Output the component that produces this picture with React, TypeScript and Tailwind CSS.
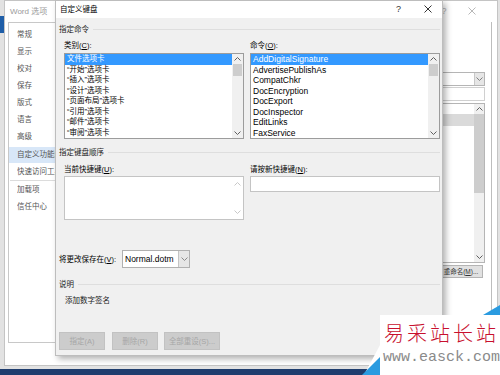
import React from "react";

const SANS = "font-[family-name:'Liberation_Sans','Noto_Sans_CJK_SC',sans-serif]";

function Chev({ up, color = "#606060" }: { up?: boolean; color?: string }) {
  return (
    <svg width="7" height="4" viewBox="0 0 7 4">
      <polyline
        points={up ? "0.5,3.5 3.5,0.5 6.5,3.5" : "0.5,0.5 3.5,3.5 6.5,0.5"}
        fill="none"
        stroke={color}
        strokeWidth="1"
      />
    </svg>
  );
}

function XIcon({ color }: { color: string }) {
  return (
    <svg width="8" height="8" viewBox="0 0 8 8">
      <path d="M0.5 0.5 L7.5 7.5 M7.5 0.5 L0.5 7.5" stroke={color} strokeWidth="1" fill="none" />
    </svg>
  );
}

function VScroll() {
  return (
    <div className="w-[11px] flex flex-col bg-[#f0f0f0]">
      <div className="h-[10px] flex items-center justify-center">
        <Chev up />
      </div>
      <div className="h-[12px] bg-[#cdcdcd] mx-[1px]" />
      <div className="flex-1" />
      <div className="h-[10px] flex items-center justify-center">
        <Chev />
      </div>
    </div>
  );
}

function ListBox({ items, latin }: { items: string[]; latin?: boolean }) {
  return (
    <div className="h-[86px] flex border border-[#9c9c9c] bg-white">
      <div className="flex-1 flex flex-col">
        {items.map((t, i) => (
          <div
            key={t}
            className={
              "h-[10.5px] leading-[10.5px] pl-[2px] whitespace-nowrap " +
              (latin ? "text-[8.5px] " : "text-[7.5px] ") +
              (i === 0 ? "bg-[#3399ff] text-white" : "text-black")
            }
          >
            {t}
          </div>
        ))}
      </div>
      <VScroll />
    </div>
  );
}

function Heading({ children }: { children: React.ReactNode }) {
  return (
    <div className="flex items-center h-[10px] text-[7.5px] text-[#222]">
      <span className="whitespace-nowrap">{children}</span>
      <div className="flex-1 h-px bg-[#dedede] ml-[4px]" />
    </div>
  );
}

function DisabledBtn({ w, children }: { w: string; children: React.ReactNode }) {
  return (
    <div
      className={
        w +
        " h-[18px] bg-[#cccccc] border border-[#c2c2c2] flex items-center justify-center text-[7.5px] text-[#a6a6a6] whitespace-nowrap"
      }
    >
      {children}
    </div>
  );
}

function NavItem({ children, h = "h-[17px]", active }: { children: React.ReactNode; h?: string; active?: boolean }) {
  return (
    <div className={h + " flex items-center pl-[8px] " + (active ? "bg-[#d8e7f8]" : "")}>
      <span className="w-[38px] overflow-hidden whitespace-nowrap">{children}</span>
    </div>
  );
}

const navItems1 = ["常规", "显示", "校对", "保存", "版式", "语言", "高级"];

export default function App() {
  return (
    <div className={"relative w-[500px] h-[375px] overflow-hidden bg-[#e2e2e2] leading-[1.2] " + SANS}>
      {/* desktop bits */}
      <div className="absolute left-0 top-[16px] w-[4px] h-[17px] bg-[#1e5ea8]" />
      <div className="absolute left-0 bottom-0 w-full h-[6px] bg-[#1f3d6e]" />

      {/* Word options window (background) */}
      <div className="absolute left-[4px] top-0 w-[494px] h-[366px] bg-white border border-[#c4c4c4] flex flex-col">
        <div className="h-[21px] flex items-center pl-[5px] text-[8px] text-[#9a9a9a]">
          <span>Word 选项</span>
          <div className="ml-auto flex items-center">
            <div className="w-[28px] flex justify-center text-[9px] text-[#b4b4b4]">?</div>
            <div className="w-[28px] flex justify-center mr-[11px]">
              <XIcon color="#b8b8b8" />
            </div>
          </div>
        </div>
        <div className="flex flex-1">
          {/* nav */}
          <div className="ml-[3px] w-[110px] h-[321px] border border-[#c8c8c8] bg-white pt-[2.5px] text-[7.5px] text-[#555]">
            {navItems1.map((t) => (
              <NavItem key={t}>{t}</NavItem>
            ))}
            <div className="h-[2px]" />
            <NavItem h="h-[16px]" active>
              自定义功能区
            </NavItem>
            <NavItem>快速访问工具栏</NavItem>
            <div className="h-px bg-[#dcdcdc] mx-[1px]" />
            <NavItem>加载项</NavItem>
            <NavItem>信任中心</NavItem>
          </div>
          {/* right content */}
          <div className="flex-1 flex justify-end">
            <div className="w-[250px] mr-[6px] flex flex-col">
              <div className="mt-[50px] h-[14px] border border-[#b5b5b5] flex justify-end">
                <div className="w-[10px] bg-[#e6e6e6] border-l border-[#c8c8c8] flex items-center justify-center">
                  <Chev color="#808080" />
                </div>
              </div>
              <div className="mt-px h-[14px] border border-[#d0d0d0]" />
              <div className="mt-[2px] h-[160px] border border-[#b5b5b5] flex">
                <div className="flex-1 pt-[10px]">
                  <div className="h-[12px] bg-[#dadada]" />
                </div>
                <div className="w-[10px] flex flex-col bg-[#f0f0f0]">
                  <div className="h-[10px] flex items-center justify-center">
                    <Chev up />
                  </div>
                  <div className="h-[79px] bg-[#cdcdcd]" />
                  <div className="flex-1" />
                  <div className="h-[10px] flex items-center justify-center">
                    <Chev />
                  </div>
                </div>
              </div>
              <div className="mt-[2px] self-end mr-[2px] w-[44px] h-[13px] bg-[#e1e1e1] border border-[#b4b4b4] flex items-center justify-center text-[6.5px] text-[#333] whitespace-nowrap">
                重命名(<u>M</u>)...
              </div>
            </div>
            <div className="w-px bg-[#bdbdbd] mr-[5px]" />
          </div>
        </div>
      </div>

      {/* Customize keyboard dialog */}
      <div className="absolute left-[55px] top-0 w-[388px] h-[356px] bg-[#f0f0f0] border border-[#bdbdbd] shadow-[3px_3px_6px_rgba(0,0,0,0.3)] flex flex-col">
        <div className="h-[17px] bg-white flex items-center pl-[4px] text-[7.5px] text-black">
          <span>自定义键盘</span>
          <div className="ml-auto flex items-center">
            <div className="w-[29px] flex justify-center text-[9px] text-[#333]">?</div>
            <div className="w-[29px] flex justify-center">
              <XIcon color="#333" />
            </div>
          </div>
        </div>
        <div className="flex flex-col pl-[3px] pr-[2px] text-[7.5px] text-black">
          <div className="mt-[6px]">
            <Heading>指定命令</Heading>
          </div>
          <div className="mt-[6px] pl-[5px] flex gap-[6px]">
            <div className="w-[180px] flex flex-col">
              <div className="h-[10px] flex items-center">
                类别(<u>C</u>):
              </div>
              <div className="mt-[3px]">
                <ListBox
                  items={[
                    "文件选项卡",
                    "“开始”选项卡",
                    "“插入”选项卡",
                    "“设计”选项卡",
                    "“页面布局”选项卡",
                    "“引用”选项卡",
                    "“邮件”选项卡",
                    "“审阅”选项卡",
                  ]}
                />
              </div>
            </div>
            <div className="flex-1 flex flex-col">
              <div className="h-[10px] flex items-center">
                命令(<u>O</u>):
              </div>
              <div className="mt-[3px]">
                <ListBox
                  latin
                  items={[
                    "AddDigitalSignature",
                    "AdvertisePublishAs",
                    "CompatChkr",
                    "DocEncryption",
                    "DocExport",
                    "DocInspector",
                    "EditLinks",
                    "FaxService",
                  ]}
                />
              </div>
            </div>
          </div>
          <div className="mt-[8px]">
            <Heading>指定键盘顺序</Heading>
          </div>
          <div className="mt-[7px] pl-[5px] flex gap-[6px]">
            <div className="w-[180px] flex flex-col">
              <div className="h-[10px] flex items-center">
                当前快捷键(<u>U</u>):
              </div>
              <div className="mt-[2px] h-[44px] border border-[#c4c4c4] bg-white flex justify-end">
                <div className="w-[11px] flex flex-col justify-between py-[5px] items-center">
                  <Chev up color="#c8c8c8" />
                  <Chev color="#c8c8c8" />
                </div>
              </div>
            </div>
            <div className="flex-1 flex flex-col">
              <div className="h-[10px] flex items-center">
                请按新快捷键(<u>N</u>):
              </div>
              <div className="mt-[2px] h-[16px] border border-[#c4c4c4] bg-white" />
            </div>
          </div>
          <div className="mt-[30px] h-[18px] flex items-center">
            <div className="w-[63px] whitespace-nowrap">
              将更改保存在(<u>V</u>):
            </div>
            <div className="w-[68px] h-[18px] border border-[#b0b0b0] bg-white flex items-center">
              <span className="flex-1 pl-[2px] text-[8.5px]">Normal.dotm</span>
              <div className="w-[11px] h-full bg-[#e6e6e6] border-l border-[#c4c4c4] flex items-center justify-center">
                <Chev color="#8a8a8a" />
              </div>
            </div>
          </div>
          <div className="mt-[11px]">
            <Heading>说明</Heading>
          </div>
          <div className="mt-[6px] h-[10px] pl-[6px] flex items-center text-[#222]">添加数字签名</div>
          <div className="mt-[27px] flex">
            <DisabledBtn w="w-[46px]">指定(A)</DisabledBtn>
            <div className="w-[7px]" />
            <DisabledBtn w="w-[46px]">删除(R)</DisabledBtn>
            <div className="w-[6px]" />
            <DisabledBtn w="w-[56px]">全部重设(S)...</DisabledBtn>
          </div>
        </div>
      </div>

      {/* watermark */}
      <div className="absolute right-0 bottom-0 w-[140px] h-[70px]">
        <svg className="absolute inset-0" width="140" height="70" viewBox="0 0 140 70">
          <polygon points="123,10 140,0 140,10" fill="#2a9be0" />
          <polygon points="20,10 140,10 140,70 4,70 20,40" fill="#ffffff" />
          <polygon points="2,70 20,52 20,70" fill="#2a9be0" />
          <polygon points="20,10 140,10 140,70 20,70" fill="#ffffff" />
        </svg>
        <div className="absolute left-[24px] top-[16px] text-[20px] leading-[24px] tracking-[3px] text-[#c8102e] whitespace-nowrap font-[family-name:'Noto_Sans_CJK_SC',sans-serif] font-light">
          易采站长站
        </div>
        <div className="absolute left-[23px] top-[44px] text-[15px] leading-[18px] text-[#8a8a8a] whitespace-nowrap font-[family-name:'Liberation_Mono',monospace]">
          www.easck.com
        </div>
      </div>
    </div>
  );
}
